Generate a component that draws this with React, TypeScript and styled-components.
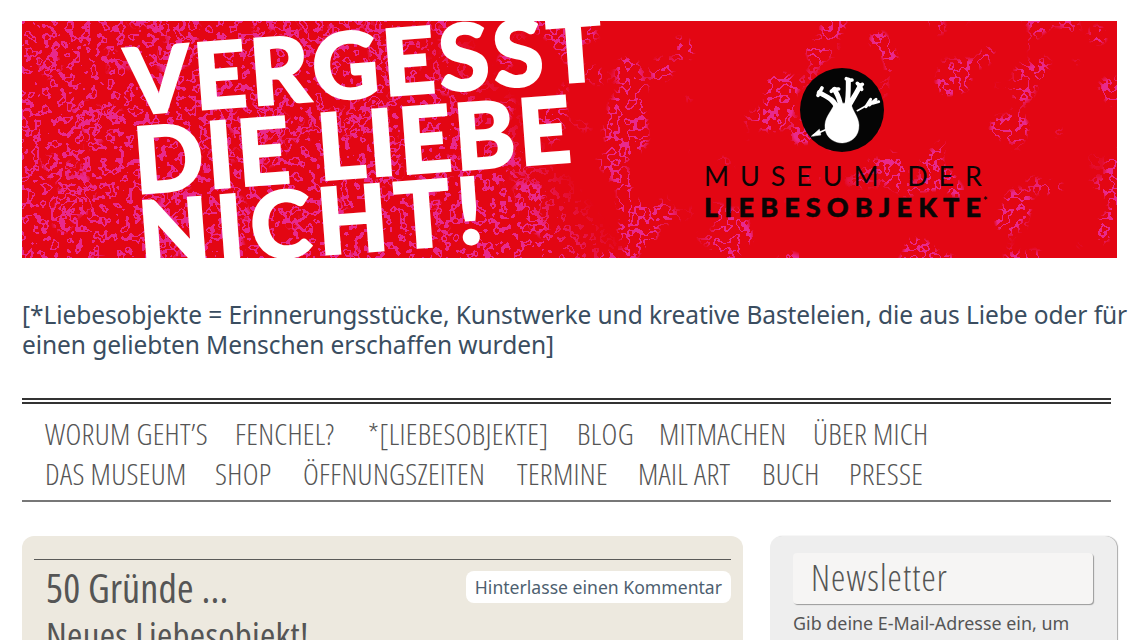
import React from "react";
import styled, { createGlobalStyle } from "styled-components";

const Global = createGlobalStyle`
  html, body { margin: 0; padding: 0; background: #fff; overflow: hidden; height: 640px; }
`;

const Page = styled.div`
  width: 1140px;
  height: 640px;
  overflow: hidden;
  box-sizing: border-box;
  padding: 21px 23px 0 22px;
  font-family: "Noto Sans", "Open Sans", sans-serif;
`;

const BannerSvg = styled.svg`
  display: block;
  width: 1095px;
  height: 237px;
`;

const Tagline = styled.p`
  margin: 42px -10px 0 0;
  font-size: 24.5px;
  line-height: 30px;
  letter-spacing: -0.07px;
  color: #3a4d60;
  white-space: nowrap;
`;

const Nav = styled.nav`
  width: 1089px;
  margin-top: 38px;
  box-sizing: border-box;
  border-top: 6px double #333;
  border-bottom: 2px solid #777;
  padding: 10px 0 6px 23px;
`;

const NavRow = styled.div`
  display: flex;
  gap: 29px;
  height: 40px;
  align-items: center;
`;

const NavLink = styled.a<{ $w: number }>`
  flex: none;
  width: ${(p) => p.$w}px;
  font-family: "Open Sans", sans-serif;
  font-stretch: 75%;
  font-weight: 300;
  font-size: 30px;
  line-height: 40px;
  letter-spacing: 0.3px;
  color: #555;
  white-space: nowrap;
`;

const Columns = styled.div`
  display: grid;
  grid-template-columns: 721px 347px;
  gap: 27px;
  margin-top: 34px;
  align-items: start;
`;

const Card = styled.article`
  background: #ede9df;
  border-radius: 12px;
  padding: 23px 12px 0;
  height: 200px;
`;

const CardRule = styled.div`
  border-top: 1px solid #5a5a58;
`;

const CardHead = styled.div`
  display: flex;
  justify-content: space-between;
  align-items: flex-start;
  padding: 11px 0 0 12px;
`;

const Title = styled.h1`
  margin: 0;
  font-family: "Open Sans", sans-serif;
  font-stretch: 75%;
  font-weight: 500;
  font-size: 40px;
  line-height: 34px;
  letter-spacing: 0.2px;
  color: #555;
`;

const Subtitle = styled(Title)`
  font-size: 37px;
  letter-spacing: 0.3px;
  padding-left: 12px;
  margin-top: 13px;
`;

const CommentLink = styled.a`
  background: #fff;
  border-radius: 8px;
  height: 32px;
  line-height: 32px;
  padding: 0 9px;
  font-size: 17.6px;
  color: #4e5f70;
  white-space: nowrap;
`;

const Sidebar = styled.aside`
  background: #eee;
  border-radius: 12px;
  box-shadow: 1px 0 1px #aaa;
  padding: 17px 24px 0 23px;
  height: 200px;
`;

const WidgetTitle = styled.h2`
  margin: 0;
  height: 51px;
  box-sizing: border-box;
  background: #f6f5f4;
  border-radius: 4px;
  box-shadow: 1px 1px 1px #999;
  padding-left: 18px;
  font-family: "Open Sans", sans-serif;
  font-stretch: 75%;
  font-weight: 300;
  font-size: 36px;
  line-height: 50px;
  letter-spacing: 1.1px;
  color: #555;
`;

const WidgetText = styled.p`
  margin: 6px 0 0;
  font-size: 17.9px;
  line-height: 26px;
  color: #555;
`;

const NAV: [string, number][][] = [
  [["WORUM GEHT’S", 161], ["FENCHEL?", 104], ["*[LIEBESOBJEKTE]", 180], ["BLOG", 53], ["MITMACHEN", 125], ["ÜBER MICH", 114]],
  [["DAS MUSEUM", 141], ["SHOP", 59], ["ÖFFNUNGSZEITEN", 185], ["TERMINE", 92], ["MAIL ART", 95], ["BUCH", 58], ["PRESSE", 80]],
];

const PINK = "0 0 0 0 0.91  0 0 0 0 0.16  0 0 0 0 0.55  0 0 0 1 0";

const Banner = () => (
  <BannerSvg viewBox="22 21 1095 237" aria-label="Vergesst die Liebe nicht!">
    <defs>
      <linearGradient id="fade" gradientUnits="userSpaceOnUse" x1="430" y1="240" x2="640" y2="90">
        <stop offset="0" stopColor="#fff" />
        <stop offset="0.35" stopColor="#fff" />
        <stop offset="0.6" stopColor="#000" />
      </linearGradient>
      <mask id="leftMask" maskUnits="userSpaceOnUse" x="22" y="21" width="1095" height="237">
        <rect x="22" y="21" width="1095" height="237" fill="url(#fade)" />
      </mask>
      <filter id="dense" x="0" y="0" width="100%" height="100%" colorInterpolationFilters="sRGB">
        <feTurbulence type="fractalNoise" baseFrequency="0.12" numOctaves="2" seed="4" />
        <feColorMatrix values={PINK} />
        <feComponentTransfer>
          <feFuncA type="discrete" tableValues="0 0 0 0 0 1 1 0 0 0 0 0 0 0 0 0" />
        </feComponentTransfer>
        <feGaussianBlur stdDeviation="0.4" />
      </filter>
      <filter id="sparse" x="0" y="0" width="100%" height="100%" colorInterpolationFilters="sRGB">
        <feTurbulence type="fractalNoise" baseFrequency="0.1" numOctaves="2" seed="11" />
        <feColorMatrix values={PINK} />
        <feComponentTransfer result="lines">
          <feFuncA type="discrete" tableValues="0 0 0 0 0 0 0 0 0 0 0 1 1 0 0 0 0 0 0 0 0 0" />
        </feComponentTransfer>
        <feTurbulence type="fractalNoise" baseFrequency="0.02" numOctaves="2" seed="9" />
        <feColorMatrix values="0 0 0 0 1  0 0 0 0 1  0 0 0 0 1  0 0 0 12 -6.6" result="patches" />
        <feComposite in="lines" in2="patches" operator="in" />
        <feGaussianBlur stdDeviation="0.3" />
      </filter>
    </defs>
    <rect x="22" y="21" width="1095" height="237" fill="#e30613" />
    <rect x="22" y="21" width="1095" height="237" filter="url(#dense)" mask="url(#leftMask)" />
    <rect x="22" y="21" width="1095" height="237" filter="url(#sparse)" />
    <g fill="#fff" stroke="#fff" strokeWidth="2" fontFamily="Lato, sans-serif" fontWeight="900" fontSize="92">
      <text x="128" y="115" textLength="478" lengthAdjust="spacing" transform="rotate(-4.2 128 115)">VERGESST</text>
      <text x="136" y="194" textLength="438" lengthAdjust="spacing" transform="rotate(-4.2 136 194)">DIE LIEBE</text>
      <text x="141" y="268" textLength="345" lengthAdjust="spacing" transform="rotate(-4.2 141 268)">NICHT!</text>
    </g>
    <circle cx="842" cy="110" r="42" fill="#050505" />
    <g transform="translate(780 50) scale(0.3333)" stroke="#fff" fill="none" strokeLinecap="round" strokeLinejoin="round">
      <path d="M100 256L140 238M232 182L280 155" strokeWidth="5" />
      <path d="M95 258L118 238L122 254Z" fill="#fff" strokeWidth="2" />
      <path d="M258 170L272 148M268 165L288 148M278 160L296 155" strokeWidth="9" />
      <path d="M170 175C165 150 140 140 118 128M182 170C180 145 170 130 163 118M200 170C206 140 205 115 205 90M208 165C222 140 232 125 240 108" strokeWidth="15" />
      <path d="M118 128L114 136M118 128L126 114M163 118L154 124M163 118L176 117M205 90L199 86M205 92L216 90M240 108L232 100M240 108L247 103M240 108L245 118" strokeWidth="11" />
      <path d="M165 160C150 190 132 205 135 235C138 265 165 280 188 279C215 278 238 258 237 225C236 200 218 185 213 160Z" fill="#fff" strokeWidth="1" />
    </g>
    <g fill="#0a0505" fontFamily="Lato, sans-serif">
      <text x="704" y="186" fontSize="27" fontWeight="400" textLength="278" lengthAdjust="spacing">MUSEUM DER</text>
      <text x="704" y="217" fontSize="27" fontWeight="900" stroke="#0a0505" strokeWidth="0.5" textLength="277" lengthAdjust="spacing">LIEBESOBJEKTE</text>
      <text x="983" y="205" fontSize="11" fontWeight="700">*</text>
    </g>
  </BannerSvg>
);

export default function App() {
  return (
    <Page>
      <Global />
      <Banner />
      <Tagline>
        [*Liebesobjekte = Erinnerungsstücke, Kunstwerke und kreative Basteleien, die aus Liebe oder für
        <br />
        einen geliebten Menschen erschaffen wurden]
      </Tagline>
      <Nav>
        {NAV.map((row, i) => (
          <NavRow key={i}>
            {row.map(([label, w]) => (
              <NavLink key={label} $w={w}>{label}</NavLink>
            ))}
          </NavRow>
        ))}
      </Nav>
      <Columns>
        <Card>
          <CardRule />
          <CardHead>
            <Title>50 Gründe ...</Title>
            <CommentLink>Hinterlasse einen Kommentar</CommentLink>
          </CardHead>
          <Subtitle as="h2">Neues Liebesobjekt!</Subtitle>
        </Card>
        <Sidebar>
          <WidgetTitle>Newsletter</WidgetTitle>
          <WidgetText>Gib deine E-Mail-Adresse ein, um</WidgetText>
        </Sidebar>
      </Columns>
    </Page>
  );
}
